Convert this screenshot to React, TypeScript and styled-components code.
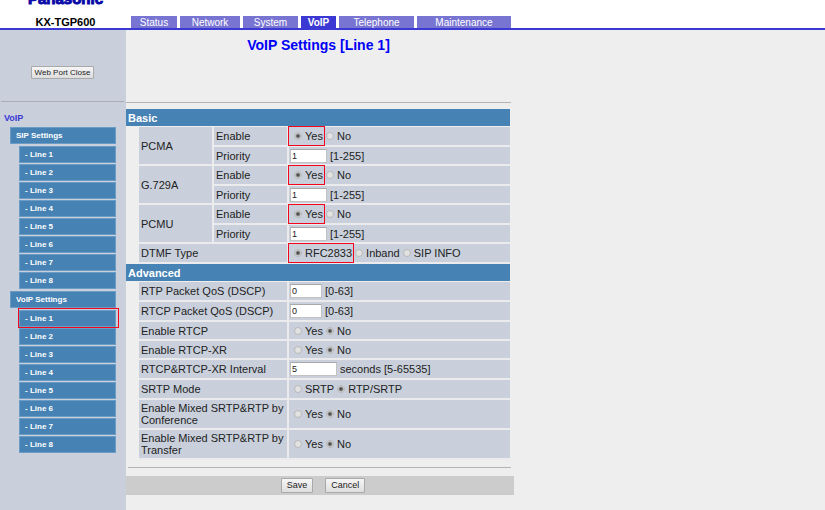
import React, { useId, useState } from "react";
import styled, { createGlobalStyle, css } from "styled-components";

const colors = {
  page: "#eeeeee",
  panel: "#c9d0db",
  steel: "#4682b4",
  navy: "#3b38d4",
  tab: "#7874d2",
  mark: "#f5041e",
};

const GlobalStyle = createGlobalStyle`
  * { box-sizing: border-box; }
  body {
    margin: 0;
    background: ${colors.page};
    color: #222;
    font: 11px/12px "Liberation Sans", Arial, sans-serif;
  }
`;

const Page = styled.div`
  display: flex;
  flex-direction: column;
  min-height: 100vh;
`;

const Header = styled.header`
  display: flex;
  align-items: flex-end;
  height: 30px;
  overflow: hidden;
  background: #fff;
  border-bottom: 2px solid ${colors.navy};
`;

const Brand = styled.div`
  flex: none;
  width: 131px;
  text-align: center;
`;

const Logo = styled.div`
  font-size: 15px;
  line-height: 16px;
  font-weight: bold;
  color: #0a0aa8;
  margin-bottom: 9px;
  -webkit-text-stroke: 1px #0a0aa8;
`;

const Model = styled.div`
  line-height: 12px;
  font-weight: bold;
  color: #000;
`;

const Tabs = styled.nav`
  display: flex;
  gap: 3px;
`;

const Tab = styled.a<{ $width: number; $active?: boolean }>`
  width: ${(p) => p.$width}px;
  height: 12px;
  text-align: center;
  text-decoration: none;
  font-size: 10px;
  line-height: 13px;
  color: #fff;
  background: ${(p) => (p.$active ? colors.navy : colors.tab)};
  font-weight: ${(p) => (p.$active ? "bold" : "normal")};
`;

const Body = styled.div`
  display: flex;
  flex: 1;
`;

const Sidebar = styled.aside`
  flex: none;
  width: 126px;
  background: ${colors.panel};
`;

const PortPanel = styled.div`
  display: flex;
  align-items: center;
  justify-content: center;
  height: 72px;
  padding-top: 13px;
  margin: 0 2px 0 1px;
  border-bottom: 1px solid #a9adb4;
`;

const Button = styled.button<{ $small?: boolean }>`
  height: ${(p) => (p.$small ? 13 : 15)}px;
  padding: 0 ${(p) => (p.$small ? 3 : 5)}px;
  border: 1px solid #a9a9a9;
  border-radius: 1px;
  background: linear-gradient(#f6f6f6, #dedede);
  color: #222;
  font-family: inherit;
  font-size: ${(p) => (p.$small ? 8 : 9)}px;
  line-height: ${(p) => (p.$small ? 11 : 13)}px;
`;

const MenuTitle = styled.h2`
  margin: 11px 0 3px 4px;
  font-size: 9px;
  line-height: 10px;
  color: ${colors.navy};
`;

const Menu = styled.nav`
  display: flex;
  flex-direction: column;
  gap: 1px;
  margin: 0 10px;
`;

const menuItem = css`
  display: block;
  height: 17px;
  background: ${colors.steel};
  border: 1px solid #6a9cc6;
  color: #fff;
  font-size: 8px;
  line-height: 15px;
  font-weight: bold;
  text-decoration: none;
`;

const MenuHead = styled.div`
  ${menuItem}
  margin: 1px 0;
  padding-left: 5px;
`;

const MenuLink = styled.a<{ $marked?: boolean }>`
  ${menuItem}
  position: relative;
  margin-left: 9px;
  padding-left: 5px;

  ${(p) =>
    p.$marked &&
    css`
      &::after {
        content: "";
        position: absolute;
        inset: -3px -4px -2px -2px;
        border: 1px solid ${colors.mark};
      }
    `}
`;

const Main = styled.main`
  flex: 1;
  min-width: 0;
`;

const Column = styled.div`
  max-width: 388px;
`;

const Title = styled.h1`
  height: 73px;
  margin: 0 3px 6px 0;
  padding-top: 7px;
  border-bottom: 1px solid #b4b4b4;
  text-align: center;
  font-size: 14px;
  line-height: 16px;
  color: #0000f8;
`;

const Settings = styled.table`
  width: calc(100% - 4px);
  table-layout: fixed;
  border-collapse: separate;
  border-spacing: 0;
`;

const SectionHead = styled.th`
  height: 18px;
  padding: 0 2px;
  border-bottom: 1px solid ${colors.page};
  background: ${colors.steel};
  color: #fff;
  text-align: left;
`;

const Row = styled.tr<{ $height: number }>`
  height: ${(p) => p.$height}px;
`;

const cell = css`
  padding: 0;
  border-bottom: 2px solid #ebebed;
  text-align: left;
  vertical-align: middle;
  font-weight: normal;
`;

const Spacer = styled.td`
  padding: 0;
`;

const Name = styled.th`
  ${cell}
  padding-left: 2px;
  background: ${colors.panel};
  border-right: 2px solid #ebebed;
`;

const Value = styled.td`
  ${cell}
  padding-left: 1px;
  background: ${colors.panel};
`;

const Line = styled.div`
  display: flex;
  align-items: center;
  gap: 3px;
`;

const Choices = styled(Line)`
  padding-left: 4px;
`;

const Choice = styled.label<{ $marked?: boolean }>`
  position: relative;
  display: flex;
  align-items: center;
  gap: 3px;
  height: 16px;
  white-space: nowrap;

  ${(p) =>
    p.$marked &&
    css`
      &::after {
        content: "";
        position: absolute;
        inset: -2px -2px -2px -6px;
        border: 1px solid ${colors.mark};
      }
    `}
`;

const Radio = styled.input`
  appearance: none;
  width: 8px;
  height: 8px;
  margin: 0;
  border: 1px solid #b8b8b8;
  border-radius: 50%;
  background: #e2e2e2;

  &:checked {
    background: radial-gradient(circle, #505050 0 1px, #dedede 3px);
  }
`;

const NumberBox = styled.input<{ $width: number }>`
  width: ${(p) => p.$width}px;
  height: 14px;
  padding: 0 1px;
  border: 1px solid #c2c2c2;
  border-top-color: #a8a8a8;
  background: #fff;
  color: #222;
  font-family: inherit;
  font-size: 9px;
`;

const Footer = styled.div`
  display: flex;
  justify-content: center;
  align-items: center;
  gap: 12px;
  height: 19px;
  margin-top: 8px;
  padding-left: 6px;
  background: #cccccc;
`;

const Rule = styled.hr`
  height: 1px;
  margin: 7px 3px 0 2px;
  border: 0;
  background: #b4b4b4;
`;

const tabs = [
  { label: "Status", width: 46 },
  { label: "Network", width: 60 },
  { label: "System", width: 55 },
  { label: "VoIP", width: 35 },
  { label: "Telephone", width: 75 },
  { label: "Maintenance", width: 94 },
];

const lines = [1, 2, 3, 4, 5, 6, 7, 8];

function RadioSet({
  label,
  options,
  value,
  marked,
}: {
  label: string;
  options: string[];
  value: string;
  marked?: boolean;
}) {
  const name = useId();
  const [selected, setSelected] = useState(value);
  return (
    <Choices role="radiogroup" aria-label={label}>
      {options.map((option, i) => (
        <Choice key={option} $marked={marked && i === 0}>
          <Radio
            type="radio"
            name={name}
            checked={selected === option}
            onChange={() => setSelected(option)}
          />
          {option}
        </Choice>
      ))}
    </Choices>
  );
}

function NumberField({
  label,
  value,
  width,
  hint,
}: {
  label: string;
  value: string;
  width: number;
  hint: string;
}) {
  return (
    <Line>
      <NumberBox type="text" aria-label={label} defaultValue={value} $width={width} />
      <span>{hint}</span>
    </Line>
  );
}

function CodecRows({ codec }: { codec: string }) {
  return (
    <>
      <Row $height={20}>
        <Spacer />
        <Name rowSpan={2}>{codec}</Name>
        <Name>Enable</Name>
        <Value>
          <RadioSet label={`${codec} enable`} options={["Yes", "No"]} value="Yes" marked />
        </Value>
      </Row>
      <Row $height={19}>
        <Spacer />
        <Name>Priority</Name>
        <Value>
          <NumberField label={`${codec} priority`} value="1" width={37} hint="[1-255]" />
        </Value>
      </Row>
    </>
  );
}

function SettingRow({
  name,
  height,
  children,
}: {
  name: string;
  height: number;
  children: React.ReactNode;
}) {
  return (
    <Row $height={height}>
      <Spacer />
      <Name colSpan={2}>{name}</Name>
      <Value>{children}</Value>
    </Row>
  );
}

function MenuGroup({ title, marked }: { title: string; marked?: number }) {
  return (
    <>
      <MenuHead>{title}</MenuHead>
      {lines.map((n) => (
        <MenuLink key={n} href="#" $marked={n === marked}>
          - Line {n}
        </MenuLink>
      ))}
    </>
  );
}

export default function App() {
  return (
    <Page>
      <GlobalStyle />
      <Header>
        <Brand>
          <Logo>Panasonic</Logo>
          <Model>KX-TGP600</Model>
        </Brand>
        <Tabs>
          {tabs.map((t) => (
            <Tab key={t.label} href="#" $width={t.width} $active={t.label === "VoIP"}>
              {t.label}
            </Tab>
          ))}
        </Tabs>
      </Header>
      <Body>
        <Sidebar>
          <PortPanel>
            <Button type="button" $small>
              Web Port Close
            </Button>
          </PortPanel>
          <MenuTitle>VoIP</MenuTitle>
          <Menu>
            <MenuGroup title="SIP Settings" />
            <MenuGroup title="VoIP Settings" marked={1} />
          </Menu>
        </Sidebar>
        <Main>
          <Column>
            <Title>VoIP Settings [Line 1]</Title>
            <Settings>
              <colgroup>
                <col width={13} />
                <col width={75} />
                <col width={75} />
                <col />
              </colgroup>
              <tbody>
                <tr>
                  <SectionHead colSpan={4}>Basic</SectionHead>
                </tr>
                <CodecRows codec="PCMA" />
                <CodecRows codec="G.729A" />
                <CodecRows codec="PCMU" />
                <SettingRow name="DTMF Type" height={20}>
                  <RadioSet
                    label="DTMF Type"
                    options={["RFC2833", "Inband", "SIP INFO"]}
                    value="RFC2833"
                    marked
                  />
                </SettingRow>
                <tr>
                  <SectionHead colSpan={4}>Advanced</SectionHead>
                </tr>
                <SettingRow name="RTP Packet QoS (DSCP)" height={20}>
                  <NumberField label="RTP Packet QoS" value="0" width={32} hint="[0-63]" />
                </SettingRow>
                <SettingRow name="RTCP Packet QoS (DSCP)" height={20}>
                  <NumberField label="RTCP Packet QoS" value="0" width={32} hint="[0-63]" />
                </SettingRow>
                <SettingRow name="Enable RTCP" height={19}>
                  <RadioSet label="Enable RTCP" options={["Yes", "No"]} value="No" />
                </SettingRow>
                <SettingRow name="Enable RTCP-XR" height={19}>
                  <RadioSet label="Enable RTCP-XR" options={["Yes", "No"]} value="No" />
                </SettingRow>
                <SettingRow name="RTCP&RTCP-XR Interval" height={20}>
                  <NumberField
                    label="RTCP and RTCP-XR Interval"
                    value="5"
                    width={47}
                    hint="seconds [5-65535]"
                  />
                </SettingRow>
                <SettingRow name="SRTP Mode" height={20}>
                  <RadioSet label="SRTP Mode" options={["SRTP", "RTP/SRTP"]} value="RTP/SRTP" />
                </SettingRow>
                <SettingRow name="Enable Mixed SRTP&RTP by Conference" height={30}>
                  <RadioSet label="Mixed by Conference" options={["Yes", "No"]} value="No" />
                </SettingRow>
                <SettingRow name="Enable Mixed SRTP&RTP by Transfer" height={30}>
                  <RadioSet label="Mixed by Transfer" options={["Yes", "No"]} value="No" />
                </SettingRow>
              </tbody>
            </Settings>
            <Rule />
            <Footer>
              <Button type="submit">Save</Button>
              <Button type="button">Cancel</Button>
            </Footer>
          </Column>
        </Main>
      </Body>
    </Page>
  );
}
